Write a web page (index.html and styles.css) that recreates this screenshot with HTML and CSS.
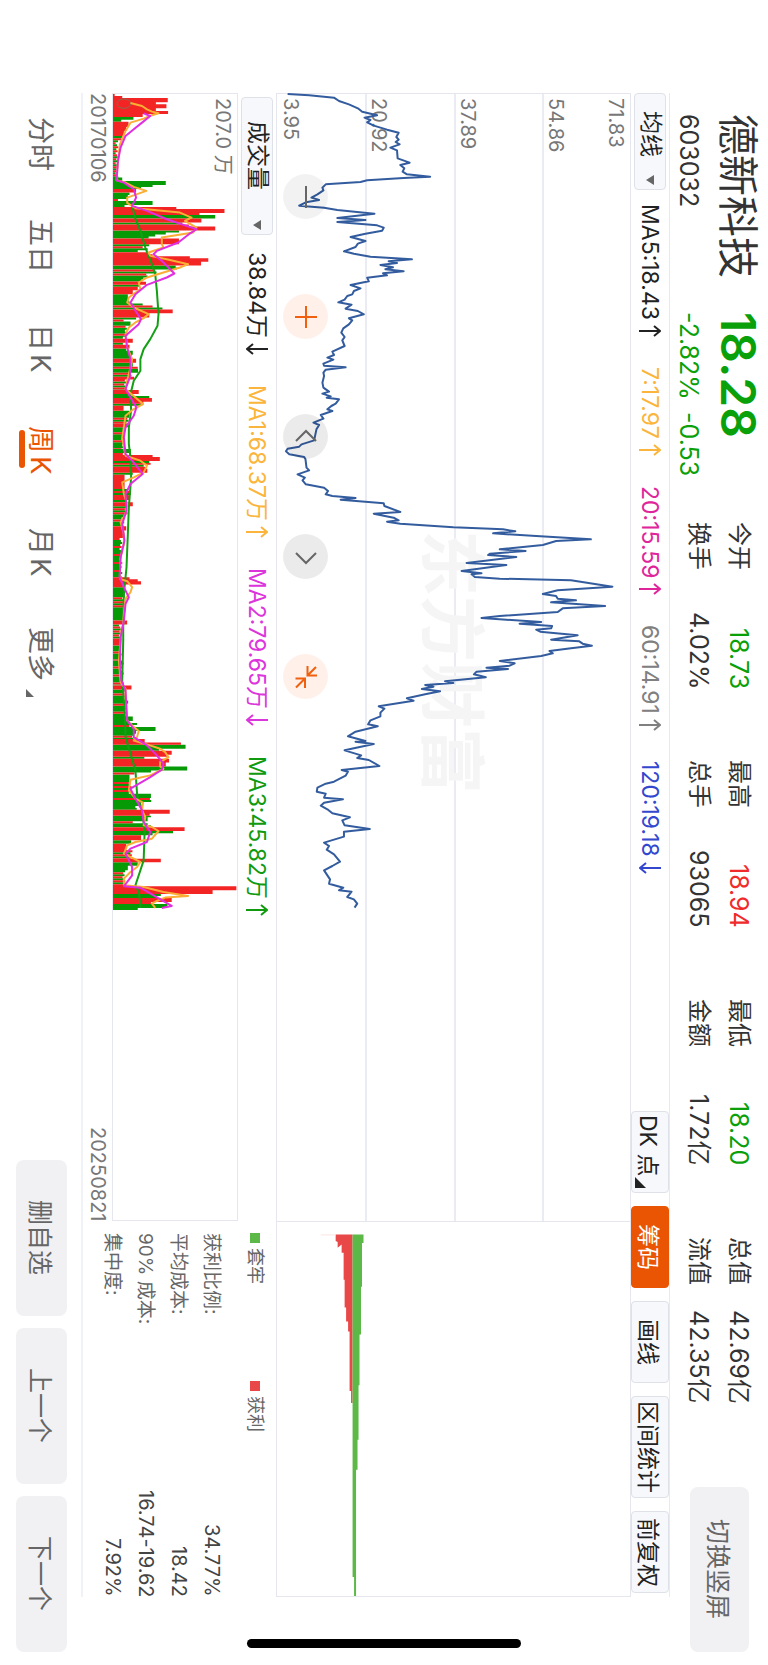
FILE: index.html
```html
<!DOCTYPE html>
<html lang="zh-CN">
<head>
<meta charset="utf-8">
<meta name="viewport" content="width=device-width, initial-scale=1">
<title>德新科技 603032</title>
<link rel="stylesheet" href="styles.css">
</head>
<body>
<svg class="defs" aria-hidden="true">
  <symbol id="up" viewBox="0 0 22 12"><path d="M0 6H21M15 1L21 6L15 11"/></symbol>
  <symbol id="down" viewBox="0 0 22 12"><path d="M22 6H1M7 1L1 6L7 11"/></symbol>
</svg>
<div class="screen">
  <header class="header">
    <div class="identity">
      <h1 class="name">德新科技</h1>
      <strong class="price fall">18.28</strong>
      <span class="code">603032</span>
      <span class="change fall"><span>-2.82%</span><span>-0.53</span></span>
    </div>
    <dl class="stats">
      <div><dt>今开</dt><dd class="fall">18.73</dd></div>
      <div><dt>最高</dt><dd class="rise">18.94</dd></div>
      <div><dt>最低</dt><dd class="fall">18.20</dd></div>
      <div><dt>总值</dt><dd>42.69亿</dd></div>
      <div><dt>换手</dt><dd>4.02%</dd></div>
      <div><dt>总手</dt><dd>93065</dd></div>
      <div><dt>金额</dt><dd>1.72亿</dd></div>
      <div><dt>流值</dt><dd>42.35亿</dd></div>
    </dl>
    <button class="soft-button rotate" type="button">切换竖屏</button>
  </header>

  <section class="toolbar">
    <label class="picker"><select class="picker-select" aria-label="主图指标"><option>均线</option></select></label>
    <ul class="readings">
      <li class="c-black">MA5:18.43<svg class="arrow"><use href="#up"/></svg></li>
      <li class="c-amber">7:17.97<svg class="arrow"><use href="#up"/></svg></li>
      <li class="c-pink">20:15.59<svg class="arrow"><use href="#up"/></svg></li>
      <li class="c-gray">60:14.91<svg class="arrow"><use href="#up"/></svg></li>
      <li class="c-blue">120:19.18<svg class="arrow"><use href="#down"/></svg></li>
    </ul>
    <div class="tools">
      <button class="tool has-menu" type="button">DK 点</button>
      <button class="tool active" type="button">筹码</button>
      <button class="tool" type="button">画线</button>
      <button class="tool tool-wide" type="button">区间统计</button>
      <button class="tool" type="button">前复权</button>
    </div>
  </section>

  <main class="charts">
    <section class="price-pane" aria-label="股价走势">
      <div class="watermark" aria-hidden="true">东方财富</div>
      <div class="bands">
        <div class="band"><span>71.83</span><span>54.86</span></div>
        <div class="band"><span>37.89</span></div>
        <div class="band"><span>20.92</span></div>
        <div class="band"><span>3.95</span></div>
      </div>
      <svg class="plot" viewBox="18 39 1065 3381" preserveAspectRatio="none"><path id="price-line" class="line line-price"/></svg>
      <div class="controls">
        <button class="round" type="button" aria-label="缩小"><svg class="glyph" viewBox="0 0 24 24"><path d="M12 1V23"/></svg></button>
        <button class="round accent" type="button" aria-label="放大"><svg class="glyph" viewBox="0 0 24 24"><path d="M12 1V23M1 12H23"/></svg></button>
        <button class="round dark" type="button" aria-label="向左"><svg class="glyph" viewBox="0 0 24 24"><path d="M2 16L12 6L22 16"/></svg></button>
        <button class="round dark" type="button" aria-label="向右"><svg class="glyph" viewBox="0 0 24 24"><path d="M2 8L12 18L22 8"/></svg></button>
        <button class="round accent" type="button" aria-label="收起"><svg class="glyph" viewBox="0 0 24 24"><path d="M13.500 1V10.500H23M13.500 10.500L22 2M11 23V13.500H1.500M11 13.500L2 22.500"/></svg></button>
      </div>
    </section>
    <section class="chip-pane" aria-label="筹码分布">
      <svg class="plot" viewBox="276 1220 355 376" preserveAspectRatio="none">
        <path class="chip-rise" d="M352 1232.500H335V1239L337 1240V1246L341 1242.500V1251H343V1278H344V1306H345.500V1320H347.500V1330H349V1390H350.500V1402H352Z"/>
        <path class="chip-hint" d="M320 1233H335"/>
        <path class="chip-fall" d="M352 1232.500H363V1241H361.500V1285H360.500V1333H359V1384H358V1439H357V1469H355.500V1596H353.500V1577H352Z"/>
      </svg>
    </section>

    <div class="volume-side">
      <section class="volume-bar">
        <label class="picker picker-long"><select class="picker-select" aria-label="副图指标"><option>成交量</option></select></label>
        <ul class="readings volume-readings">
          <li class="c-black">38.84万<svg class="arrow"><use href="#down"/></svg></li>
          <li class="c-amber">MA1:68.37万<svg class="arrow"><use href="#up"/></svg></li>
          <li class="c-violet">MA2:79.65万<svg class="arrow"><use href="#down"/></svg></li>
          <li class="c-green">MA3:45.82万<svg class="arrow"><use href="#up"/></svg></li>
        </ul>
      </section>
      <section class="volume-pane" aria-label="成交量">
        <span class="axis-label">207.0 万</span>
        <svg class="plot" viewBox="97 39 376 3381" preserveAspectRatio="none">
          <path id="bars-green" class="bars-green"/>
          <path id="bars-red" class="bars-red"/>
          <ellipse class="marker" cx="130" cy="68" rx="21" ry="14"/>
          <path id="ma3" class="line line-green"/>
          <path id="ma1" class="line line-amber"/>
          <path id="ma2" class="line line-violet"/>
        </svg>
      </section>
      <div class="dates"><time>20170106</time><time>20250821</time></div>
    </div>

    <aside class="chip-info">
      <ul class="legend">
        <li class="legend-fall">套牢</li>
        <li class="legend-rise">获利</li>
      </ul>
      <dl class="facts">
        <div><dt>获利比例:</dt><dd>34.77%</dd></div>
        <div><dt>平均成本:</dt><dd>18.42</dd></div>
        <div><dt>90% 成本:</dt><dd>16.74-19.62</dd></div>
        <div><dt>集中度:</dt><dd>7.92%</dd></div>
      </dl>
    </aside>
  </main>

  <footer class="footer">
    <nav class="tabs">
      <button class="tab" type="button">分时</button>
      <button class="tab" type="button">五日</button>
      <button class="tab" type="button">日K</button>
      <button class="tab" type="button"><span class="current">周K</span></button>
      <button class="tab" type="button">月K</button>
      <button class="tab" type="button"><span class="more">更多</span></button>
    </nav>
    <div class="actions">
      <button class="soft-button" type="button">删自选</button>
      <button class="soft-button" type="button">上一个</button>
      <button class="soft-button" type="button">下一个</button>
    </div>
  </footer>
  <div class="home-indicator"></div>
</div>
<script src="script.js"></script>
</body>
</html>
```
FILE: styles.css
```css
* { box-sizing: border-box; }

/* The whole screen reads sideways: inline axis runs down, block axis runs right to left. */
body {
  margin: 0;
  writing-mode: vertical-rl;
  text-orientation: sideways;
  font-family: Inter, "Noto Sans CJK SC", sans-serif;
  color: #333;
  background: #fff;
}
h1, ul, dl, dd { margin: 0; padding: 0; font-weight: 400; }
ul { list-style: none; }
button, select {
  writing-mode: vertical-rl;
  text-orientation: sideways;
  font: inherit;
  color: inherit;
  border: 0;
  padding: 0;
  margin: 0;
  background: none;
}
.defs { position: absolute; width: 0; height: 0; }

.screen {
  position: relative;
  display: flex;
  flex-direction: column;
  inline-size: 100vh;
  block-size: 100vw;
  white-space: nowrap;
}
.fall { color: #09a009; }
.rise { color: #f02b2b; }
.c-black { color: #222; }
.c-amber { color: #fbb53c; }
.c-pink { color: #e0259a; }
.c-gray { color: #808080; }
.c-blue { color: #3347cf; }
.c-violet { color: #dc35dc; }
.c-green { color: #109a10; }

/* Header */
.header {
  display: flex;
  block-size: 98px;
  padding-inline: 114px 13px;
}
.identity {
  display: grid;
  grid-template-columns: 198px 210px;
  grid-template-rows: 60px 38px;
  align-items: center;
}
.name { font-size: 41px; line-height: 48px; }
.price { font-size: 48px; font-weight: 600; line-height: 48px; }
.code, .change { font-size: 25px; line-height: 32px; }
.change { display: flex; gap: 12px; }
.stats {
  flex: 1;
  display: grid;
  grid-template-columns: repeat(4, 1fr);
  grid-auto-rows: 40px;
  column-gap: 71px;
  padding-block-start: 9px;
  line-height: 40px;
}
.stats div { display: flex; justify-content: space-between; }
.stats dt { font-size: 24px; }
.stats dd { font-size: 25px; }
.soft-button {
  border-radius: 8px;
  background: #f1f1f4;
  color: #666;
  font-size: 25px;
  text-align: center;
}
.rotate {
  inline-size: 165px;
  block-size: 59px;
  margin-block-start: 19px;
  margin-inline-start: 83px;
}

/* Indicator toolbar */
.toolbar {
  display: flex;
  align-items: center;
  block-size: 39px;
  margin-inline: 93px 68px;
  border-block-start: 1px solid #e9eaf0;
}
.picker { position: relative; inline-size: 97px; block-size: 32px; }
.picker-long { inline-size: 138px; }
.picker-select {
  appearance: none;
  inline-size: 100%;
  block-size: 100%;
  padding-inline: 17px;
  border: 1px solid #dfe1e8;
  border-radius: 4px;
  background: #f7f8fb;
  color: #222;
  font-size: 23px;
}
.picker-long .picker-select { padding-inline: 23px; }
.picker::after {
  content: "";
  position: absolute;
  inset-inline-end: 5px;
  inset-block-start: 12px;
  border: 5px solid transparent;
  border-block-start: 8px solid #666;
  border-block-end: 0;
}
.readings {
  display: flex;
  gap: 30px;
  margin-inline-start: 14px;
  font-size: 23px;
  line-height: 36px;
}
.readings li { display: flex; align-items: center; gap: 5px; }
.volume-readings { margin-inline-start: 17px; }
.arrow {
  width: 22px;
  height: 12px;
  fill: none;
  stroke: currentColor;
  stroke-width: 2px;
}
.tools { display: flex; gap: 13px; align-self: stretch; margin-inline: auto 4px; }
.tool {
  position: relative;
  inline-size: 82px;
  border: 1px solid #dfe1e8;
  border-radius: 4px;
  background: #f7f8fb;
  color: #222;
  font-size: 23px;
  text-align: center;
}
.tool-wide { inline-size: 102px; }
.tool.active { border-color: #ea5504; background: #ea5504; color: #fff; }
.has-menu { padding-inline-end: 12px; }
.has-menu::after {
  content: "";
  position: absolute;
  inset-inline-end: 4px;
  inset-block-end: 3px;
  width: 11px;
  height: 11px;
  background: #222;
  clip-path: polygon(0 0, 100% 100%, 0 100%);
}

/* Charts */
.charts {
  flex: 1;
  min-block-size: 0;
  display: grid;
  grid-template-columns: 3fr 1fr;
  grid-template-rows: minmax(0, 1fr) auto;
  margin-inline: 93px 68px;
}
.price-pane, .chip-pane { position: relative; border: 1px solid #e6e7ee; }
.price-pane { border-inline-end: 0; }
.bands { display: grid; grid-template-rows: repeat(4, 1fr); block-size: 100%; }
.band {
  display: flex;
  flex-direction: column;
  justify-content: flex-end;
  padding-inline-start: 4px;
  padding-block-start: 2px;
  border-block-end: 2px solid #eaebf3;
  color: #777;
  font-size: 20px;
  line-height: 24px;
}
.band:first-child { justify-content: space-between; }
.band:last-child { padding-block-end: 2px; border: 0; }
.watermark {
  position: absolute;
  inset-block-start: 142px;
  inset-inline-start: 436px;
  color: #f5f5f6;
  font-size: 66px;
  font-weight: 700;
  line-height: 72px;
}
.plot { position: absolute; inset: 0; width: 100%; height: 100%; overflow: visible; }
.line { fill: none; stroke-width: 2px; stroke-linejoin: round; vector-effect: non-scaling-stroke; }
.line-price { stroke: #335c9e; }
.line-green { stroke: #14a014; }
.line-amber { stroke: #fbae35; }
.line-violet { stroke: #e02fe0; }
.bars-green { fill: #079a07; }
.bars-red { fill: #f32424; }
.marker { fill: none; stroke: #8a6a50; stroke-width: 3px; }
.chip-fall { fill: #5cb947; }
.chip-rise { fill: #e84848; }
.chip-hint { stroke: #fbe4e4; }
.controls {
  position: absolute;
  inset-inline-start: 80px;
  inset-block-end: 6px;
  display: flex;
  gap: 75px;
}
.round {
  display: grid;
  place-items: center;
  width: 45px;
  height: 45px;
  border-radius: 50%;
  background: rgb(0 0 0 / 5%);
  color: #666;
}
.round.dark { background: rgb(0 0 0 / 8%); }
.round.accent { background: rgb(255 90 10 / 9%); color: #f0600f; }
.glyph { width: 24px; height: 24px; fill: none; stroke: currentColor; stroke-width: 2px; }

/* Volume */
.volume-bar { display: flex; align-items: center; block-size: 38px; padding-inline-start: 4px; }
.volume-pane {
  position: relative;
  block-size: 126px;
  border: 1px solid #e6e7ee;
}
.axis-label {
  position: absolute;
  inset-block-start: 2px;
  inset-inline-start: 4px;
  color: #777;
  font-size: 20px;
  line-height: 24px;
}
.dates {
  display: flex;
  justify-content: space-between;
  block-size: 29px;
  color: #777;
  font-size: 20px;
  line-height: 28px;
}

/* Chip distribution facts */
.chip-info { padding-inline-start: 12px; color: #666; }
.legend { display: flex; block-size: 48px; font-size: 18px; line-height: 42px; }
.legend li { display: flex; align-items: center; gap: 5px; inline-size: 148px; block-size: 42px; }
.legend li::before { content: ""; width: 10px; height: 10px; background: #5cb947; }
.legend .legend-rise::before { background: #e84848; }
.facts { display: grid; grid-auto-rows: 33px; line-height: 33px; }
.facts div { display: flex; justify-content: space-between; }
.facts dt { font-size: 19px; }
.facts dd { font-size: 20px; color: #444; }

/* Footer */
.footer {
  position: relative;
  display: flex;
  align-items: center;
  justify-content: space-between;
  block-size: 83px;
  padding-inline: 93px 13px;
}
.footer::before {
  content: "";
  position: absolute;
  inset-block-start: 0;
  inset-inline: 93px 68px;
  border-block-start: 2px solid #f1f2f7;
}
.tabs {
  display: grid;
  grid-template-columns: repeat(6, 102px);
  padding-block-start: 3px;
  color: #666;
  font-size: 27px;
  line-height: 40px;
}
.tab { text-align: center; text-autospace: normal; }
.tab span { display: inline-block; position: relative; }
.current { color: #ea5504; }
.current::after {
  content: "";
  position: absolute;
  inset-block-end: -1px;
  inset-inline: 4px 6px;
  block-size: 6px;
  border-radius: 3px;
  background: #ea5504;
}
.more::after {
  content: "";
  position: absolute;
  inset-inline-end: -16px;
  inset-block-end: 6px;
  width: 8px;
  height: 8px;
  background: #666;
  clip-path: polygon(0 0, 100% 100%, 0 100%);
}
.actions { display: flex; gap: 12px; }
.actions .soft-button { inline-size: 156px; block-size: 51px; }

.home-indicator {
  position: absolute;
  inset-inline-end: 17px;
  inset-block-start: 247px;
  block-size: 274px;
  inline-size: 9px;
  border-radius: 5px;
  background: #000;
}
```
FILE: script.js
```js
// Each block of points carries its own offset along the time axis.
const price = [
  [0, "50,39 115,43 190,50 205,60 235,70 262,82 275,92 320,103 282,110 300,117 290,124 310,134 350,146 385,155 378,168 385,176 376,183 388,190 360,200 380,208 382,232 418,245 390,252 402,262 397,272 410,280 480,287 400,291 290,298 270,303 165,310 155,320 158,328 140,340 122,350 145,357 105,364 85,374 160,380 200,387 312,398 200,411 285,417 200,423 320,433 340,440 335,449 285,458 240,468 285,480 262,488 255,498 220,511 250,518 300,527 425,535 355,541 380,546 330,552 368,559 345,565 400,571 338,577 350,583 290,590 295,601 240,612 270,622 250,630 245,640 230,645 222,656 203,664 243,671 225,683 262,690 280,700 235,712 245,718 235,730 218,742"],
  [750, "212,5 222,18 215,28 222,45 185,62 190,72 170,80 188,86 158,98 160,104 225,109 165,116 158,125 160,135 155,155 158,170 175,182 155,188 180,196 168,200 205,205 195,218 182,225 170,235 185,240 150,252 158,263 128,275 145,282 137,295 130,328 92,340 85,347 50,353 45,361 55,370 100,378 104,385 107,410 115,418 80,430 102,440 95,448 105,460 160,470 172,480 165,490 185,495 255,501 210,506 340,517 342,525 390,543 310,548 370,560 385,568 350,572 390,578 550,589 700,595 737,601 670,607 800,615 965,625 860,630 820,642 690,655 768,660 660,668 655,672 740,678 590,696 710,702 575,720 635,727 605,730 615,738"],
  [1440, "690,53 905,58 1030,77 865,88 820,99 860,105 865,113 920,118 845,124 1008,135 880,142 865,153 690,165 635,171 815,183 750,188 848,195 845,202 800,206 812,212 925,223 845,236 930,241 940,248 968,254 905,262 840,270 850,277 815,285 690,300 735,307 720,314 650,320 715,324 620,332 612,340 648,349 525,361 550,366 465,372 490,377 455,384 510,391 465,400 410,412 430,419 325,436 342,443 330,455 330,466 300,478 293,490 322,496 255,512 232,526 285,540 255,542 310,549 222,568 272,583 260,591 295,597 327,615 213,627 232,632 225,644 190,662 165,668 140,680 138,692 165,698 160,710 217,715 160,725 150,734 170,745 185,757 238,769 215,778 222,793 298,804 220,812 220,827 160,845 175,855 168,866 190,880 208,902 185,915 160,928 178,955 175,968 218,980 205,988 243,992 230,1008 250,1015 260,1028 252,1040"]
];
const ma1 = [
  [0, "150,66 185,75 200,85 215,92 235,97 205,106 190,113 150,125 135,150 118,190 110,260 108,298 135,305 160,318 198,330 140,350 140,366 165,382 230,388 300,395 335,410 315,420 350,440 340,455 245,470 245,490 250,500 205,515 210,525 260,535 325,550 300,560 260,572 200,590 175,605 180,625 145,650 140,665 160,680 205,700 190,712 165,725 145,740 135,760 140,800 155,835"],
  [840, "150,20 140,60 135,85 165,110 188,130 160,145 135,165 130,200 125,230 130,260 135,285 180,300 200,315 190,335 160,350 125,365 130,400 140,430 135,460 120,485 130,520 130,550 120,590 118,640 118,655 140,662 155,680 150,695 135,715 130,760 128,790 122,810"],
  [1680, "120,0 115,60 120,125 135,145 135,170 138,200 140,240 155,255 175,272 170,290 160,300 200,312 240,325 255,335 265,350 240,365 240,378 250,385 210,405 150,418 145,450 165,475 188,487 185,510 195,530 190,555 215,560 235,572 215,595 165,605 140,615 130,640 160,655 180,665 170,680 150,695 130,715 130,735 190,740 250,755 325,767 255,772 230,782 215,790 225,803"]
];
const ma2 = [
  [0, "190,97 210,105 185,125 160,145 135,165 120,200 112,240 108,298 130,305 160,325 167,350 155,375 200,390 260,415 320,435 350,445 330,458 295,485 230,510 220,520 245,540 265,560 283,578 260,590 200,612 165,640 150,665 165,690 182,715 175,730 135,765 140,800 150,835"],
  [840, "150,5 148,50 135,85 150,110 168,140 160,165 135,200 130,230 135,280 155,300 175,325 187,340 150,370 135,400 138,450 125,490 132,540 120,590 117,650 130,680 145,710 135,730 130,780 120,830"],
  [1680, "120,0 118,60 122,120 135,150 138,210 140,240 160,265 160,290 200,315 230,345 250,370 245,388 210,410 150,445 165,475 185,510 190,545 210,575 200,605 150,625 135,640 155,680 155,705 130,738 180,742 220,765 275,797 245,803"]
];
const ma3 = [
  [0, "155,375 165,415 180,450 195,500 215,550 225,580 230,630 235,700 232,735 210,775 190,805 180,835"],
  [840, "180,30 160,60 150,100 152,150 145,200 145,250 150,290 152,350 145,440 142,520 138,620 130,700 128,800"],
  [1680, "128,0 125,120 132,200 135,290 150,340 165,390 170,460 185,510 193,570 190,660 165,735 175,755 180,790 180,803"]
];
// start end volume tone: r = up weeks, g = down weeks, s = mostly down, t = evenly mixed
const volume = [
  [0, "39 45 5 r;45 51 28 r;51 64 166 r;64 70 130 r;70 82 162 r;82 90 130 r;90 99 167 r;99 108 90 r;107 116 62 g;116 122 25 g;122 138 47 r;138 150 40 r;150 165 33 r;165 172 28 g;172 178 25 r;178 184 15 g;184 290 12 t;290 300 28 g;300 312 160 g;312 318 120 g;318 324 85 g;324 335 70 r;335 342 50 g;342 354 45 g;354 360 15 r;360 372 120 g;372 378 35 g;378 384 192 r;384 396 338 r;396 402 262 r;402 413 310 g;413 425 268 r;425 431 210 g;431 437 230 r;437 443 310 r;443 449 310 r;449 455 200 g;455 461 160 g;461 467 128 g;467 473 108 g;473 490 200 r;490 496 110 g;496 502 90 r;502 508 105 g;508 514 75 g;514 520 110 r;520 526 120 r;526 532 233 r;532 543 289 r;543 554 267 r;554 560 190 g;560 566 193 g;566 578 130 t;578 590 105 s;590 603 88 s;603 612 100 r;612 618 80 g;618 628 75 r;628 640 60 r;640 655 45 g;655 668 50 s;668 674 90 g;674 680 120 r;680 686 150 g;686 697 181 r;697 710 110 r;710 716 70 g;716 722 32 r;722 735 53 g;735 768 40 s;768 774 30 g;774 786 60 r;786 792 30 g;792 803 50 r;803 810 40 g;810 822 60 g;822 834 55 s;834 840 70 r"],
  [840, "0 6 70 r;6 18 60 g;18 24 75 r;24 36 76 g;36 48 52 s;48 56 64 r;56 88 38 t;88 100 78 r;100 106 50 g;106 112 110 g;112 123 118 r;123 136 90 t;136 150 32 r;150 165 50 g;165 190 45 t;190 200 50 r;200 215 35 g;215 265 30 s;265 277 54 g;277 283 30 r;283 289 120 r;289 301 142 r;301 312 110 t;312 324 95 t;324 336 104 r;336 342 60 g;342 385 35 r;385 405 50 t;405 418 50 r;418 425 40 g;425 437 60 r;437 465 40 t;465 497 30 s;497 510 40 r;510 532 30 r;532 650 24 s;650 656 50 r;656 662 75 r;662 672 85 r;672 680 30 r;680 710 35 g;710 740 32 t;740 780 30 g;780 792 43 r;792 840 22 t"],
  [1680, "0 15 22 r;15 60 22 s;60 135 28 s;135 147 56 r;147 180 35 s;180 190 46 g;190 228 38 s;228 242 60 g;242 248 50 g;248 254 73 g;254 260 50 r;260 272 129 g;272 280 70 g;280 296 60 s;296 306 96 r;306 313 206 r;313 325 220 g;325 331 140 g;331 343 178 r;343 349 165 r;349 355 95 g;355 366 170 r;366 378 160 r;378 390 225 g;390 396 115 g;396 402 65 r;402 425 50 g;425 460 52 t;460 473 115 g;473 485 112 t;485 497 85 g;497 508 70 s;508 520 172 r;520 531 115 t;531 543 105 g;543 549 60 r;549 555 105 g;555 561 115 g;561 572 217 r;572 579 182 g;579 585 120 g;585 600 85 r;600 610 55 g;610 630 40 r;630 655 55 t;655 666 145 r;666 676 75 g;676 690 45 g;690 738 33 t;738 750 374 r;750 761 302 r;761 767 145 g;767 773 130 g;773 785 178 r;785 791 115 r;791 803 165 g;803 809 75 g"]
];

const toPath = series => "M" + series
  .flatMap(([dy, pts]) => pts.split(" ").map(p => p.split(",").map(Number)).map(([x, y]) => x + " " + (y + dy)))
  .join("L");

for (const [id, series] of Object.entries({ "price-line": price, ma1, ma2, ma3 })) {
  document.getElementById(id).setAttribute("d", toPath(series));
}

const bars = { g: "", r: "" };
const addBar = (tone, y, end, size) => { bars[tone] += `M97 ${y}h${size}V${end}H97Z`; };
let week = 0;
for (const [dy, text] of volume) {
  for (const item of text.split(";")) {
    const [a, b, size, tone] = item.split(" ");
    const end = +b + dy;
    if (tone === "r" || tone === "g") {
      addBar(tone, +a + dy, end, +size);
      continue;
    }
    const every = tone === "s" ? 4 : 2;
    for (let y = +a + dy; y < end; y += 6) {
      const jitter = (week * 7) % 5 * 2 - 4;
      addBar(week++ % every ? "g" : "r", y, Math.min(y + 6, end), +size + jitter);
    }
  }
}
document.getElementById("bars-green").setAttribute("d", bars.g);
document.getElementById("bars-red").setAttribute("d", bars.r);
```
